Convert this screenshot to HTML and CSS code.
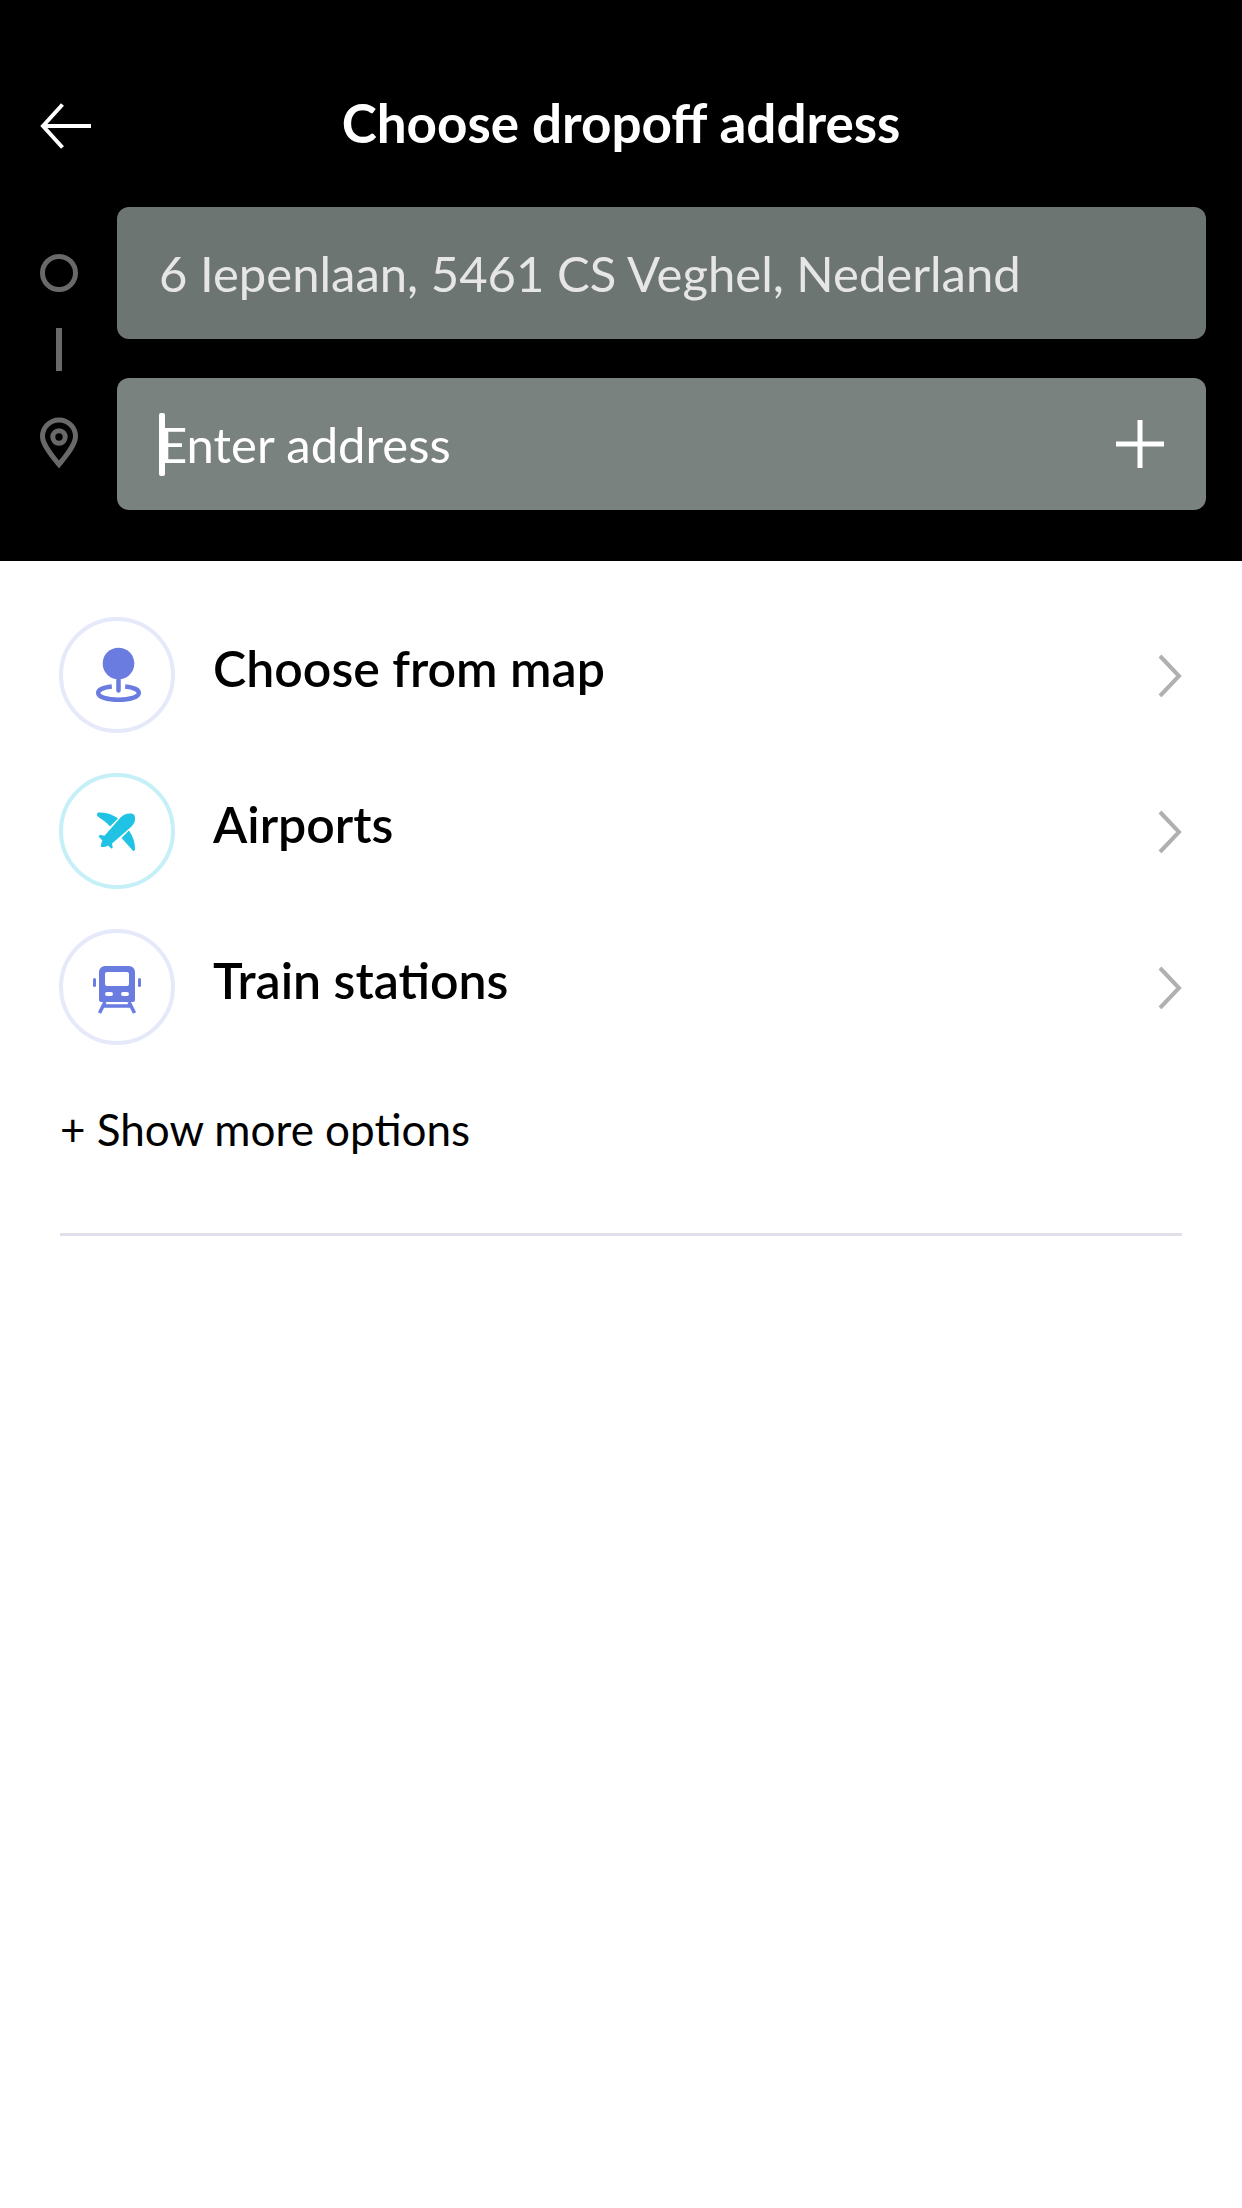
FILE: index.html
```html
<!DOCTYPE html>
<html lang="en">
<head>
<meta charset="utf-8">
<meta name="viewport" content="width=device-width, initial-scale=1">
<title>Choose dropoff address</title>
<link rel="stylesheet" href="styles.css">
</head>
<body>
<header class="header">
  <div class="topbar">
    <button class="icon-button back" type="button" aria-label="Back">
      <svg width="52" height="46" viewBox="0 0 52 46" fill="none" stroke="#fff" stroke-width="4"><path d="M51 23H3M22.500 1.500L3 23l19.500 21.500"/></svg>
    </button>
    <h1 class="title">Choose dropoff address</h1>
  </div>
  <form class="route">
    <div class="rail">
      <label for="pickup" aria-label="Pickup address">
        <svg width="38" height="38" viewBox="0 0 38 38" fill="none" stroke="#696969" stroke-width="5"><circle cx="19" cy="19" r="16.500"/></svg>
      </label>
      <span class="link"></span>
      <label for="dropoff" aria-label="Dropoff address">
        <svg width="38" height="62" viewBox="0 -10 38 62" fill="none" stroke="#696969" stroke-width="5"><path d="M19 47.500C13 40 2.500 28 2.500 19.500a16.500 16.500 0 0 1 33 0C35.500 28 25 40 19 47.500z"/><circle cx="19" cy="20" r="6.200"/></svg>
      </label>
    </div>
    <div class="fields">
      <div class="field">
        <input class="input" id="pickup" type="text" value="6 Iepenlaan, 5461 CS Veghel, Nederland">
      </div>
      <div class="field field-active">
        <span class="caret"></span>
        <input class="input" id="dropoff" type="text" placeholder="Enter address">
        <button class="icon-button" type="button" aria-label="Add stop">
          <svg width="48" height="48" viewBox="0 0 48 48" stroke="#fff" stroke-width="5"><path d="M0 24h48M24 0v48"/></svg>
        </button>
      </div>
    </div>
  </form>
</header>
<main class="content">
  <nav class="options">
    <a class="option" href="#map">
      <span class="badge">
        <svg width="108" height="108" viewBox="0 0 108 108" fill="none" stroke="#6a7ce0" stroke-width="4.500"><circle cx="55.500" cy="42.500" r="15.800" fill="#6a7ce0" stroke="none"/><path stroke-linecap="round" d="M55.500 56v13.500"/><path d="M48.800 65.600C40 66.500 35.200 69 35.200 72c0 4 9 6.800 20.300 6.800S75.800 76 75.800 72c0-3-4.800-5.500-13.600-6.400"/></svg>
      </span>
      <span class="label">Choose from map</span>
      <svg class="chevron" width="24" height="44" viewBox="0 0 24 44" fill="none" stroke="#b0b0b0" stroke-width="4"><path d="M2 3l19 20L2 43"/></svg>
    </a>
    <a class="option" href="#airports">
      <span class="badge badge-cyan">
        <svg width="108" height="108" viewBox="0 0 108 108" fill="#20c3e3"><path d="M34 37.500c0-2 1.500-2.300 3.500-2 7 .3 12 2 17.500 6l-8 8C43.500 45 39 42.500 35.500 40c-1-.7-1.500-1.500-1.500-2.500zM66 53.500c4 6 6 12 6 18 0 3-2 3.500-3.500.5L58.500 61z"/><path d="M57.500 40.500C61 37 64 36 68.500 36.500c2.500.5 3.500 2 3.500 4.500 0 3.500-.5 5.500-4 9L49 66.500l.6 3.500c.2 1.800-1.600 2.200-2.400.6L45 68.500c-2 1.300-4 1.700-7 1.600 0-3 .3-4.500 1.400-6.500L36.500 60.500c-1.400-1.200-.7-2.600 1-2.400l4 .6z"/></svg>
      </span>
      <span class="label">Airports</span>
      <svg class="chevron" width="24" height="44" viewBox="0 0 24 44" fill="none" stroke="#b0b0b0" stroke-width="4"><path d="M2 3l19 20L2 43"/></svg>
    </a>
    <a class="option" href="#stations">
      <span class="badge">
        <svg width="108" height="108" viewBox="0 0 108 108" fill="#6a7ce0"><path fill-rule="evenodd" d="M42 33h24a6 6 0 0 1 6 6v28a2 2 0 0 1-2 2H38a2 2 0 0 1-2-2V39a6 6 0 0 1 6-6zm2 6a2 2 0 0 0-2 2v10a2 2 0 0 0 2 2h20a2 2 0 0 0 2-2V41a2 2 0 0 0-2-2zm0 20a2 2 0 0 0 0 4h4a2 2 0 0 0 0-4zm16 0a2 2 0 0 0 0 4h4a2 2 0 0 0 0-4z"/><rect x="30" y="45" width="3" height="9" rx="1.500"/><rect x="75" y="45" width="3" height="9" rx="1.500"/><path d="M42 69l-5.500 11M66 69l5.500 11M41 73h26" fill="none" stroke="#6a7ce0" stroke-width="3.500"/></svg>
      </span>
      <span class="label">Train stations</span>
      <svg class="chevron" width="24" height="44" viewBox="0 0 24 44" fill="none" stroke="#b0b0b0" stroke-width="4"><path d="M2 3l19 20L2 43"/></svg>
    </a>
  </nav>
  <button class="more" type="button">+ Show more options</button>
</main>
</body>
</html>
```
FILE: styles.css
```css
* {
  box-sizing: border-box;
}

body {
  margin: 0;
  background: #fff;
  color: #000;
  font-family: Lato, sans-serif;
}

svg {
  display: block;
}

.header {
  padding: 96px 36px 51px 0;
  background: #000;
  color: #fff;
}

.topbar {
  display: grid;
  grid-template-columns: 52px 1fr 52px;
  align-items: center;
  height: 60px;
  margin: 0 4px 51px 40px;
}

.icon-button {
  padding: 0;
  border: 0;
  background: none;
}

.title {
  margin: 0;
  padding-bottom: 6px;
  font-size: 53px;
  line-height: 54px;
  font-weight: 700;
  text-align: center;
}

.route {
  display: grid;
  grid-template-columns: 117px 1fr;
}

.rail {
  display: flex;
  flex-direction: column;
  align-items: center;
  gap: 36px;
  padding-top: 47px;
}

.link {
  width: 6px;
  height: 43px;
  background: #696969;
}

.fields {
  display: grid;
  gap: 39px;
}

.field {
  position: relative;
  display: flex;
  align-items: center;
  height: 132px;
  padding: 0 42px;
  border-radius: 12px;
  background: #6d7572;
}

.field-active {
  background: #7a827f;
}

.input {
  flex: 1;
  min-width: 0;
  height: 60px;
  padding: 0;
  border: 0;
  outline: 0;
  background: none;
  color: #e6e6e6;
  font: inherit;
  font-size: 49px;
}

.input::placeholder {
  color: #fff;
  opacity: 1;
}

.caret {
  position: absolute;
  left: 42px;
  width: 6px;
  height: 63px;
  border-radius: 2px;
  background: #fff;
}

.content {
  padding: 56px 60px 0;
}

.options {
  display: grid;
  gap: 40px;
}

.option {
  display: grid;
  grid-template-columns: 116px 1fr 24px;
  column-gap: 38px;
  align-items: center;
  margin-left: -1px;
  color: inherit;
  text-decoration: none;
}

.badge {
  border: 4px solid #e5e9fa;
  border-radius: 50%;
}

.badge-cyan {
  border-color: #c6f0f8;
}

.label {
  padding-bottom: 14px;
  font-size: 50px;
  line-height: 60px;
  font-weight: 600;
}

.more {
  width: 100%;
  padding: 54px 0 74px;
  border: 0;
  border-bottom: 3px solid #dfe0ea;
  background: none;
  color: inherit;
  font: inherit;
  font-size: 44px;
  line-height: 60px;
  text-align: left;
}
```
